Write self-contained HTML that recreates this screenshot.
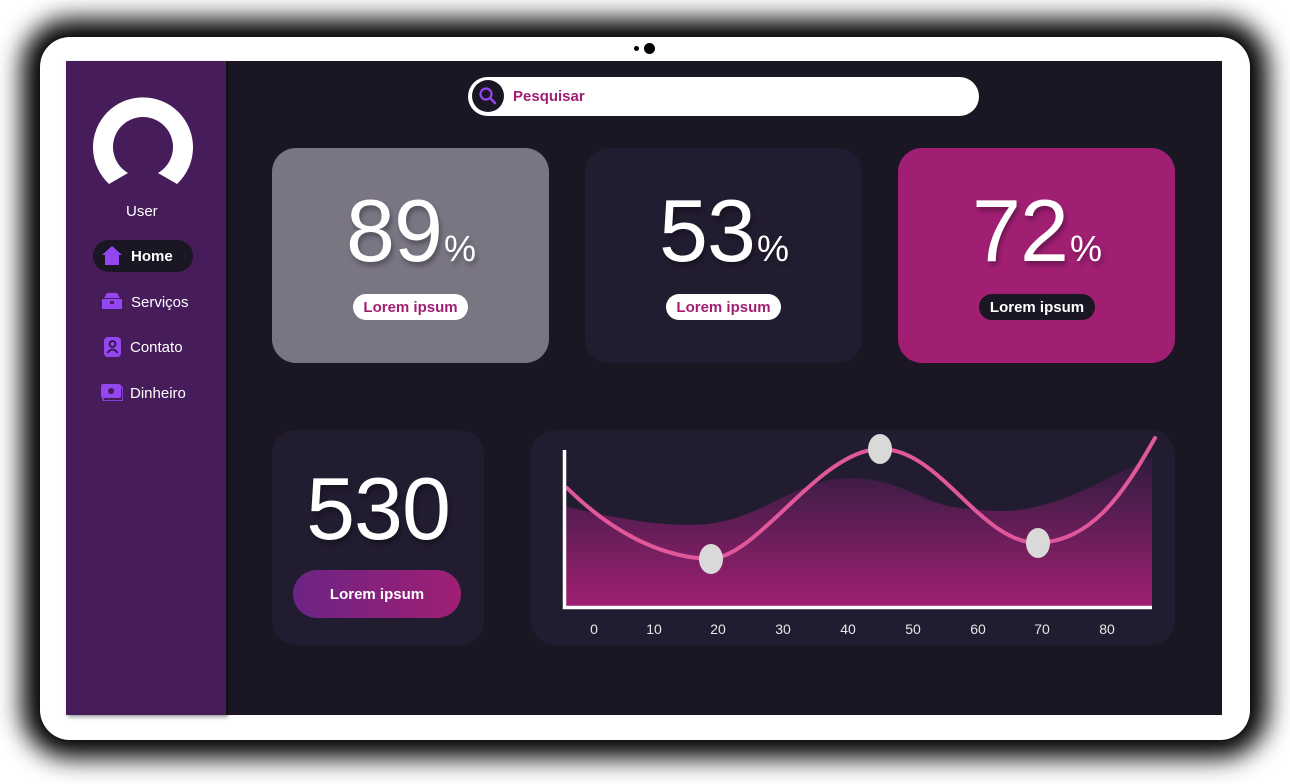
<!DOCTYPE html>
<html><head><meta charset="utf-8"><style>
*{margin:0;padding:0;box-sizing:border-box}
body{width:1290px;height:784px;background:#fff;position:relative;overflow:hidden;font-family:"Liberation Sans",sans-serif}
.abs{position:absolute}
#dev{left:40px;top:37px;width:1210px;height:703px;background:#fff;border-radius:30px;box-shadow:0 0 25px 18px #000}
#screen{left:66px;top:61px;width:1156px;height:654px;background:#1b1623}
#side{left:66px;top:61px;width:160px;height:654px;background:#461c5a;box-shadow:2px 2px 4px rgba(0,0,0,.4)}
.card{position:absolute;border-radius:24px}
.num{position:absolute;width:100%;text-align:center;color:#fff;font-size:88px;top:32px;text-shadow:2px 4px 5px rgba(0,0,0,.3);letter-spacing:-1px}
.num span{font-size:36px;margin-left:2px}
.pill{position:absolute;height:26px;border-radius:13px;font-weight:bold;font-size:15px;line-height:27px;text-align:center;top:146px}
.nav{position:absolute;left:102px;color:#fff;font-size:15px}
</style></head><body>
<div class="abs" id="dev"></div>
<div class="abs" style="left:634px;top:46px;width:5px;height:5px;border-radius:50%;background:#000"></div>
<div class="abs" style="left:644px;top:43px;width:11px;height:11px;border-radius:50%;background:#000"></div>
<div class="abs" id="screen"></div>
<div class="abs" id="side"></div>
<svg class="abs" style="left:92px;top:96px" width="102" height="90" viewBox="0 0 102 90">
<path d="M17 88 A50 50 0 1 1 85 88 L66 77 A30 30 0 1 0 36 77 Z" fill="#fff"/>
</svg>
<div class="nav" style="left:126px;top:203px">User</div>
<div class="abs" style="left:93px;top:240px;width:100px;height:32px;border-radius:16px;background:#1b1623"></div>
<svg class="abs" style="left:102px;top:246px" width="20" height="19" viewBox="0 0 20 19"><path d="M10 0 L20 9 L17 9 L17 19 L3 19 L3 9 L0 9 Z" fill="#9447f0"/></svg>
<div class="nav" style="left:131px;top:248px;font-weight:bold">Home</div>
<svg class="abs" style="left:102px;top:293px" width="20" height="16" viewBox="0 0 20 16"><path d="M5 0h10l3 5H2z M0 6h20v10H0z" fill="#9447f0"/><rect x="8" y="8" width="4" height="3" fill="#461c5a"/></svg>
<div class="nav" style="left:131px;top:294px">Serviços</div>
<svg class="abs" style="left:102px;top:337px" width="20" height="20" viewBox="0 0 20 20"><rect x="2" y="0" width="17" height="20" rx="4" fill="#9447f0"/><circle cx="10.5" cy="7" r="3" fill="none" stroke="#2a1540" stroke-width="1.8"/><path d="M5.5 16 Q10.5 9 15.5 16" fill="none" stroke="#2a1540" stroke-width="1.8"/></svg>
<div class="nav" style="left:130px;top:339px">Contato</div>
<svg class="abs" style="left:101px;top:384px" width="22" height="17" viewBox="0 0 22 17"><rect x="0" y="0" width="20" height="14" rx="2" fill="#9447f0"/><rect x="2" y="3" width="20" height="14" rx="2" fill="none" stroke="#9447f0" stroke-width="1.5"/><circle cx="10" cy="7" r="3" fill="#461c5a"/></svg>
<div class="nav" style="left:130px;top:385px">Dinheiro</div>
<div class="abs" style="left:468px;top:77px;width:511px;height:39px;border-radius:20px;background:#fff"></div>
<div class="abs" style="left:472px;top:80px;width:32px;height:32px;border-radius:50%;background:#1b1623"></div>
<svg class="abs" style="left:478px;top:86px" width="20" height="20" viewBox="0 0 20 20"><circle cx="8" cy="8" r="5.5" fill="none" stroke="#9447f0" stroke-width="2.2"/><path d="M12 12 L17 17" stroke="#9447f0" stroke-width="2.4" stroke-linecap="round"/></svg>
<div class="abs" style="left:513px;top:88px;color:#a01f73;font-weight:bold;font-size:15px">Pesquisar</div>
<div class="card" style="left:272px;top:148px;width:277px;height:215px;background:#7a7583">
<div class="num">89<span>%</span></div>
<div class="pill" style="left:81px;width:115px;background:#fff;color:#a01f73">Lorem ipsum</div></div>
<div class="card" style="left:585px;top:148px;width:277px;height:215px;background:#221c30">
<div class="num">53<span>%</span></div>
<div class="pill" style="left:81px;width:115px;background:#fff;color:#a01f73">Lorem ipsum</div></div>
<div class="card" style="left:898px;top:148px;width:277px;height:215px;background:#a01f73">
<div class="num">72<span>%</span></div>
<div class="pill" style="left:81px;width:116px;background:#1b1623;color:#fff">Lorem ipsum</div></div>
<div class="card" style="left:272px;top:430px;width:212px;height:215px;background:#221c30">
<div class="num" style="top:28px;font-size:88px">530</div>
<div class="abs" style="left:21px;top:140px;width:168px;height:48px;border-radius:24px;background:linear-gradient(90deg,#6c2485,#a01f73);color:#fff;font-weight:bold;font-size:15px;line-height:49px;text-align:center">Lorem ipsum</div></div>
<div class="card" style="left:531px;top:430px;width:644px;height:215px;background:#221c30"></div>
<svg class="abs" style="left:531px;top:420px" width="644" height="230" viewBox="531 420 644 230">
<defs><linearGradient id="g" x1="0" y1="0" x2="0" y2="1"><stop offset="0" stop-color="#2f1c3e"/><stop offset="1" stop-color="#a01f73"/></linearGradient></defs>
<path d="M565 506 C620 520 680 530 720 522 C770 512 800 478 850 478 C900 478 925 505 960 508 C1000 512 1020 515 1070 496 C1110 480 1130 465 1152 458 L1152 606 L565 606 Z" fill="url(#g)"/>
<path d="M567 488 C620 540 670 558 711 559 C760 555 820 450 880 449 C940 448 980 543 1038 543 C1090 540 1120 500 1155 438" fill="none" stroke="#e0589a" stroke-width="4" stroke-linecap="round"/>
<path d="M564.5 450 V607.5 H1152" fill="none" stroke="#fff" stroke-width="3.5"/>
<ellipse cx="711" cy="559" rx="12" ry="15" fill="#d9d9d9"/>
<ellipse cx="880" cy="449" rx="12" ry="15" fill="#d9d9d9"/>
<ellipse cx="1038" cy="543" rx="12" ry="15" fill="#d9d9d9"/>
<g fill="#e8e8e8" font-family="Liberation Sans" font-size="14" text-anchor="middle">
<text x="594" y="634">0</text><text x="654" y="634">10</text><text x="718" y="634">20</text><text x="783" y="634">30</text><text x="848" y="634">40</text><text x="913" y="634">50</text><text x="978" y="634">60</text><text x="1042" y="634">70</text><text x="1107" y="634">80</text></g>
</svg>
</body></html>
